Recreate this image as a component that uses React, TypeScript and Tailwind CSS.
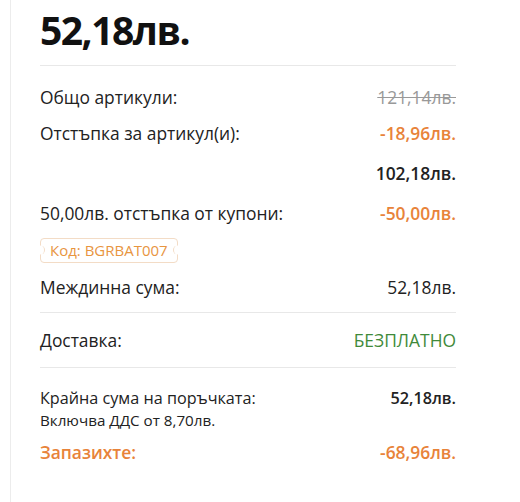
import React from 'react'

const orange = 'text-[#e8833a]'

function Row({ label, value, labelClass = '', valueClass = '', className = '' }: { label?: string; value: string; labelClass?: string; valueClass?: string; className?: string }) {
  return (
    <div className={`flex items-center justify-between ${className}`}>
      <span className={labelClass}>{label}</span>
      <span className={valueClass}>{value}</span>
    </div>
  )
}

export default function App() {
  return (
    <div className="min-h-screen bg-white flex font-['Open_Sans',sans-serif] text-[#222]">
      <div className="ml-[10px] w-px bg-[#ececec]" />
      <div className="flex-1 pl-[29px] pr-[64px]">
        {/* Total */}
        <div className="pt-[6px] pb-[11px] border-b border-[#e8e8e8]">
          <h1 className="text-[39px] leading-[48px] font-bold tracking-[-1.5px] text-[#111]">52,18лв.</h1>
        </div>

        <div className="pt-[15px] text-[17.4px] leading-[24px]">
          <Row label="Общо артикули:" value="121,14лв." className="h-[32px]" valueClass="line-through text-[#999]" />
          <Row label="Отстъпка за артикул(и):" value="-18,96лв." className="h-[40px]" valueClass={`font-semibold ${orange}`} />
          <Row value="102,18лв." className="h-[40px]" valueClass="font-semibold" />
          <Row label="50,00лв. отстъпка от купони:" value="-50,00лв." className="h-[40px]" valueClass={`font-semibold ${orange}`} />

          {/* Coupon tag */}
          <div className="pt-[4px]">
            <div className="relative inline-flex items-center h-[25px] px-[9px] border border-[#f3dcc6] rounded-[4px] text-[15px] text-[#e8953f]">
              Код: BGRBAT007
              <span className="absolute left-[-5px] top-1/2 -translate-y-1/2 w-[9px] h-[9px] rounded-full bg-white border-r border-[#f3dcc6]" />
              <span className="absolute right-[-5px] top-1/2 -translate-y-1/2 w-[9px] h-[9px] rounded-full bg-white border-l border-[#f3dcc6]" />
            </div>
          </div>

          <Row label="Междинна сума:" value="52,18лв." className="h-[50px] border-b border-[#e8e8e8]" />
          <Row label="Доставка:" value="БЕЗПЛАТНО" className="h-[55px] border-b border-[#e8e8e8]" valueClass="text-[#3f8a3a]" />

          <div className="pt-[18px]">
            <Row label="Крайна сума на поръчката:" value="52,18лв." labelClass="text-[16.2px]" valueClass="text-[16.2px] font-semibold" />
            <div className="text-[15.2px] leading-[20px]">Включва ДДС от 8,70лв.</div>
            <Row label="Запазихте:" value="-68,96лв." className={`h-[45px] font-semibold ${orange}`} />
          </div>
        </div>
      </div>
    </div>
  )
}
